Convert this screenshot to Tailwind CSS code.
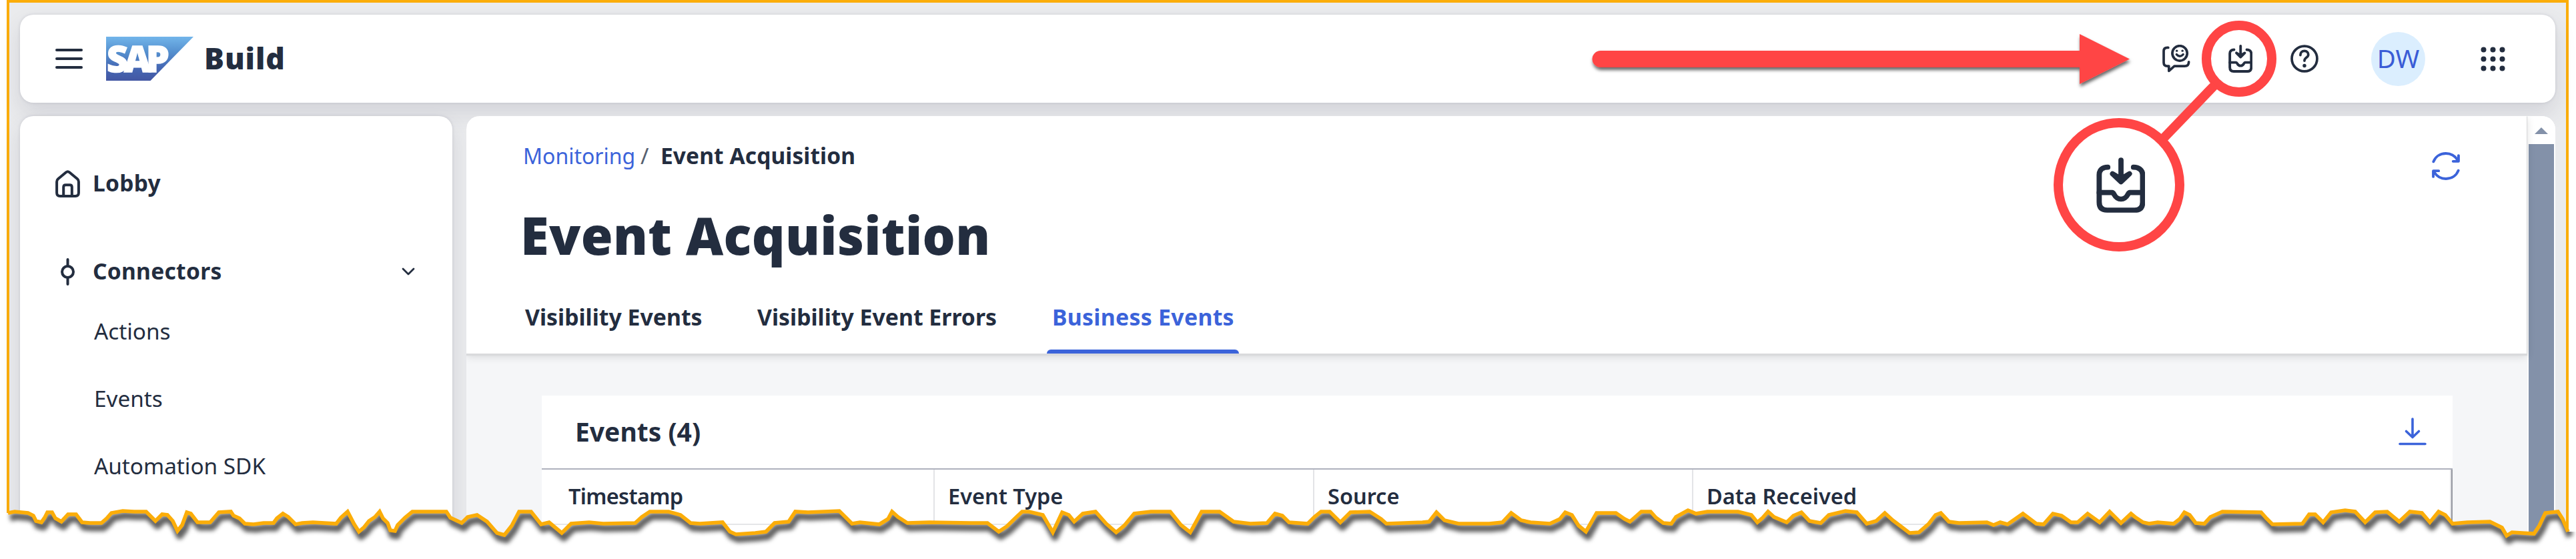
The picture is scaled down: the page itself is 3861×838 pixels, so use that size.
<!DOCTYPE html>
<html lang="en">
<head>
<meta charset="utf-8">
<title>SAP Build – Event Acquisition</title>
<script src="https://cdn.jsdelivr.net/npm/@tailwindcss/browser@4"></script>
</head>
<body class="bg-white">
<div class="relative h-[838px] w-[3861px] overflow-hidden bg-white font-['Noto_Sans',sans-serif] text-[#232d3f]">

  <div class="ml-[10px] flex h-[838px] w-[3840px] flex-col gap-5 border-x-4 border-t-4 border-[#fbad09] bg-[#eaebed] pt-[18px] pr-4 pl-4">

    <!-- Shell bar -->
    <header class="flex h-[132px] shrink-0 items-center rounded-[20px] bg-white pl-[53px] shadow-[0_0_4px_rgba(60,60,90,0.16),0_16px_32px_rgba(60,60,90,0.13)]">
      <div class="flex w-[41px] flex-col gap-[9px]">
        <div class="h-1 rounded-full bg-[#232d3f]"></div>
        <div class="h-1 rounded-full bg-[#232d3f]"></div>
        <div class="h-1 rounded-full bg-[#232d3f]"></div>
      </div>
      <svg class="ml-[35px] h-[66px] w-[131px] overflow-visible" viewBox="0 0 131 66">
        <defs><linearGradient id="sap" x1="0" y1="0" x2="0" y2="1"><stop offset="0" stop-color="#72b5ea"/><stop offset=".35" stop-color="#5590cf"/><stop offset=".7" stop-color="#4568b4"/><stop offset="1" stop-color="#4357a3"/></linearGradient></defs>
        <path d="M0 0H131L66.500 66H0Z" fill="url(#sap)"/>
        <text y="53" font-family="Noto Sans, sans-serif" font-weight="900" font-size="55" fill="#fff" stroke="#fff" stroke-width="1.500"><tspan x="1">S</tspan><tspan x="27">A</tspan><tspan x="60">P</tspan></text>
      </svg>
      <div class="ml-[16px] w-[2935px] text-[44.500px] leading-[60px] font-black tracking-[0.9px]"><div class="-mt-[2px]">Build</div></div>

      <div class="flex items-center">
        <svg class="h-[42px] w-[42px]" viewBox="0 0 124 124" fill="none" stroke="#232d3f" stroke-width="11" stroke-linecap="round" stroke-linejoin="round">
          <path d="M26 13H22Q6 13 6 29V79Q6 95 22 95H29V116L53 95H99Q117 95 117 76"/>
          <circle cx="77" cy="38" r="33"/><path d="M63 43Q77 59 92 43" stroke-width="10"/>
          <circle cx="64" cy="27" r="5" fill="#232d3f" stroke="none"/><circle cx="89" cy="27" r="5" fill="#232d3f" stroke="none"/>
        </svg>
        <svg class="ml-[57px] h-[42px] w-9" viewBox="0 0 72 83" fill="none" stroke="#232d3f" stroke-width="7.700" stroke-linecap="round" stroke-linejoin="round" preserveAspectRatio="none">
          <path d="M17 14.700C9 14.700 4.300 19 4.300 26V67Q4.300 79 16 79H57Q68.500 79 68.500 67V26C68.500 19 63 14.700 55 14.700"/>
          <path d="M4.300 52.700H23.500C27 52.700 26.500 62.500 36.500 62.500S46 52.700 49.500 52.700H68.500M36.500 4V34"/>
          <path d="M24 24.500L36.500 36.500L49 24.500L36.500 32Z" fill="#232d3f"/>
        </svg>
        <svg class="ml-[57px] h-[42px] w-[42px]" viewBox="0 0 124 124" fill="none" stroke="#232d3f" stroke-width="11" stroke-linecap="round">
          <circle cx="62" cy="62" r="56"/><path d="M44 46C44 35 51 28 62 28C73 28 79 35 79 44C79 58 62 56 62 71"/>
          <circle cx="62" cy="93" r="8" fill="#232d3f" stroke="none"/>
        </svg>
        <div class="ml-[79px] flex h-[81px] w-[81px] items-center justify-center rounded-full bg-[#dbeefe] pb-[2px] text-[38.500px] leading-none text-[#3a5cd6]">DW</div>
        <svg class="ml-[83px] h-[37px] w-[37px]" viewBox="0 0 37 37" fill="#232d3f">
          <circle cx="4.500" cy="4.500" r="4"/><circle cx="18.500" cy="4.500" r="4"/><circle cx="32.500" cy="4.500" r="4"/>
          <circle cx="4.500" cy="18.500" r="4"/><circle cx="18.500" cy="18.500" r="4"/><circle cx="32.500" cy="18.500" r="4"/>
          <circle cx="4.500" cy="32.500" r="4"/><circle cx="18.500" cy="32.500" r="4"/><circle cx="32.500" cy="32.500" r="4"/>
        </svg>
      </div>
    </header>

    <div class="flex min-h-0 grow gap-[21px]">
      <!-- Side navigation -->
      <nav class="w-[648px] shrink-0 rounded-t-[20px] bg-white pt-[62px] pl-[53px] shadow-[0_0_4px_rgba(60,60,90,0.16),0_16px_32px_rgba(60,60,90,0.13)]">
        <div class="flex h-[78px] items-center text-[33.500px] leading-none font-bold tracking-[0.3px]">
          <svg class="mr-[19px] h-[41px] w-[37px]" viewBox="0 0 37 41" fill="none" stroke="#232d3f" stroke-width="4" stroke-linejoin="round">
            <path d="M16 3.200Q18.500 1.200 21 3.200L33 13.300Q34.900 15 34.900 17.500V34Q34.900 38.900 30 38.900H7Q2.100 38.900 2.100 34V17.500Q2.100 15 4 13.300Z"/>
            <path d="M12.200 38V25.500Q12.200 22.200 15.500 22.200H21.500Q24.800 22.200 24.800 25.500V38"/>
          </svg>Lobby
        </div>
        <div class="mt-[54px] flex h-[78px] items-center text-[33.500px] leading-none font-bold tracking-[0.3px]">
          <svg class="mr-[19px] h-[41px] w-[37px]" viewBox="0 0 37 41" fill="none" stroke="#232d3f" stroke-width="4" stroke-linecap="round">
            <circle cx="18.500" cy="20.500" r="8.500"/><path d="M18.500 2V11M18.500 30V39"/>
          </svg>
          <span class="w-[463px]">Connectors</span>
          <svg class="h-3 w-5" viewBox="0 0 20 12" fill="none" stroke="#232d3f" stroke-width="2.800" stroke-linecap="round" stroke-linejoin="round"><path d="M2 2L10 10L18 2"/></svg>
        </div>
        <div class="ml-[58px] text-[33.300px] leading-[101px]">
          <div>Actions</div>
          <div>Events</div>
          <div>Automation SDK</div>
        </div>
      </nav>

      <!-- Content -->
      <main class="flex grow overflow-hidden rounded-t-[20px] bg-white">
        <div class="w-[3088px] shrink-0 bg-[#f5f6f8]">
          <section class="relative h-[356px] bg-white pl-[79px] shadow-[0_2px_1px_1px_#d9dadc,0_4px_12px_rgba(0,0,0,0.14)]">
            <div class="flex justify-between pt-[34px] pr-[100px]">
              <div>
                <div class="flex h-[52px] items-center pl-[6px] text-[33.500px] leading-none">
                  <span class="w-[176px] text-[32px] text-[#3b63da]">Monitoring</span>
                  <span class="w-[30px] text-[#56606f]">/</span>
                  <span class="font-bold tracking-[0.1px]">Event Acquisition</span>
                </div>
                <h1 class="mt-[36px] ml-[2px] text-[77.500px] leading-[112px] font-black tracking-[0.4px]">Event Acquisition</h1>
              </div>
              <svg class="mt-[20px] h-[42px] w-[42px]" viewBox="0 0 41 41" fill="none" stroke="#3b63da" stroke-width="3.800" stroke-linecap="round" stroke-linejoin="round">
                <path d="M2.300 14C5 7 11.500 2 20.500 2C28 2 34 6 37.500 11.500M39 5V13.500H31"/>
                <path d="M38.700 27C36 34 29.500 39 20.500 39C13 39 7 35 3.500 29.500M2 36V27.500H10"/>
              </svg>
            </div>
            <div class="mt-[17px] flex h-[104px] text-[33.800px] leading-[100px] font-bold">
              <div class="w-[347px] pl-[9px]">Visibility Events</div>
              <div class="w-[444px] pl-[10px]">Visibility Event Errors</div>
              <div class="w-[288px] pl-[8px] tracking-[0.3px] text-[#3b63da]">Business Events</div>
            </div>
            <div class="absolute bottom-0 left-[870px] h-[6px] w-[288px] rounded-t-md bg-[#3b63da]"></div>
          </section>

          <section class="mt-[63px] ml-[113px] h-[300px] w-[2864px] bg-white">
            <div class="flex h-[109px] items-center justify-between pr-[39px] pb-[2px] pl-[50px]">
              <h2 class="text-[39px] leading-none font-bold">Events (4)</h2>
              <svg class="h-[42px] w-[42px]" viewBox="0 0 42 42" fill="none" stroke="#3b63da" stroke-width="3.600" stroke-linecap="round" stroke-linejoin="round"><path d="M21 2V27M11.500 20.500L21 29.500L30.500 20.500M2 39.500H40"/></svg>
            </div>
            <div class="flex h-[85px] border-t-2 border-b-2 border-t-[#aeb1bd] border-b-[#e5e6e8] text-[32.500px] leading-[79px] font-semibold">
              <div class="w-[589px] border-r-2 border-[#e3e4e7] pl-10 tracking-[-0.7px]">Timestamp</div>
              <div class="w-[569px] border-r-2 border-[#e3e4e7] pl-[20px]">Event Type</div>
              <div class="w-[568px] border-r-2 border-[#e3e4e7] pl-[20px]">Source</div>
              <div class="grow border-r-2 border-[#e3e4e7] pl-[20px]">Data Received</div>
              <div class="w-[2px] bg-[#94979f]"></div>
            </div>
          </section>
        </div>
        <!-- Scrollbar -->
        <div class="flex w-[43px] shrink-0 flex-col items-center border-l border-[#f3f3f4] bg-white pt-[17px]">
          <svg class="h-[10px] w-5" viewBox="0 0 20 10"><path d="M10 0L20 10H0Z" fill="#8391a9"/></svg>
          <div class="mt-[15px] w-[38px] grow bg-[#8391a9]"></div>
        </div>
      </main>
    </div>
  </div>

  <!-- Torn bottom edge and callout drawings laid over the page -->
  <svg class="absolute inset-0 h-[838px] w-[3861px]" viewBox="0 0 3861 838" fill="none">
    <defs>
      <path id="tear" d="M12 769L22 767 42 769 50 773 54 781 62 783 67 776 71 768 78 768 83 777 92 782 102 771 114 771 123 783 135 784 152 784 160 777 167 769 184 766 201 767 219 767 233 781 243 771 251 772 259 781 266 796 273 787 280 768 286 770 296 783 315 783 328 768 346 767 350 773 359 777 367 785 380 786 395 784 410 784 415 777 424 770 432 775 443 786 453 784 469 783 504 785 511 776 521 767 531 786 538 797 546 790 553 781 562 775 569 767 574 777 581 784 585 795 592 796 596 787 607 776 618 767 634 767 669 767 675 776 692 784 701 775 715 772 730 782 745 799 756 802 767 788 778 767 796 767 811 786 823 783 842 799 856 785 883 783 904 785 952 784 962 775 974 767 1002 767 1020 772 1035 784 1049 785 1083 783 1094 797 1103 801 1132 799 1148 797 1161 784 1182 782 1192 767 1211 768 1258 766 1277 785 1289 783 1318 786 1331 778 1337 767 1346 775 1360 784 1393 783 1455 784 1480 784 1497 797 1509 789 1532 767 1542 767 1563 772 1578 798 1592 768 1602 772 1610 782 1623 770 1642 767 1658 785 1673 798 1685 788 1700 770 1725 767 1754 767 1770 787 1784 798 1801 767 1828 767 1849 782 1874 785 1899 784 1911 770 1922 773 1932 783 1960 785 1970 775 1980 767 1993 767 2001 775 2009 783 2024 768 2053 767 2070 778 2078 785 2132 783 2142 782 2153 768 2165 780 2186 785 2232 785 2252 783 2265 769 2280 780 2294 783 2323 785 2338 778 2346 768 2356 772 2366 788 2377 797 2385 783 2393 769 2422 769 2435 778 2443 782 2460 767 2474 767 2482 776 2493 784 2505 785 2512 775 2530 765 2542 770 2559 767 2605 767 2625 772 2634 783 2642 776 2650 767 2659 775 2678 783 2688 773 2700 768 2712 781 2729 784 2741 772 2766 766 2783 768 2798 785 2812 781 2825 769 2837 780 2849 789 2862 799 2876 798 2891 785 2901 772 2909 769 2921 782 2936 784 2978 783 2988 787 2998 783 3009 786 3032 770 3052 785 3063 786 3077 770 3090 773 3104 783 3114 783 3129 770 3147 783 3162 767 3179 784 3194 770 3200 775 3212 783 3221 785 3234 783 3258 785 3267 778 3274 768 3282 772 3291 784 3304 785 3313 775 3331 767 3389 768 3397 777 3406 786 3451 785 3461 771 3470 771 3482 783 3494 768 3515 765 3530 767 3545 783 3560 768 3578 767 3596 782 3612 767 3630 769 3642 783 3655 767 3665 772 3676 785 3698 783 3732 782 3750 791 3757 803 3765 798 3798 800 3806 788 3815 769 3834 767 3841 778 3849 797"/>
      <clipPath id="below"><path id="belowPath" d="M0 769H3861V838H0Z"/></clipPath>
      <filter id="soft" filterUnits="userSpaceOnUse" x="0" y="740" width="3861" height="98"><feGaussianBlur stdDeviation="3"/></filter>
      <filter id="drop" x="-5%" y="-30%" width="110%" height="180%"><feDropShadow dx="1" dy="4" stdDeviation="2.500" flood-color="#000" flood-opacity=".6"/></filter>
    </defs>
    <g clip-path="url(#below)">
      <rect x="0" y="740" width="3861" height="98" fill="#fff"/>
      <g filter="url(#soft)"><use href="#tear" transform="translate(3 7)" stroke="#000" stroke-opacity=".62" stroke-width="11" stroke-linejoin="round"/></g>
    </g>
    <use href="#tear" stroke="#fbad09" stroke-width="5.600" stroke-linejoin="miter"/>

    <path filter="url(#drop)" fill="#ff4545" d="M2399 76H3117V51L3192 88.500L3117 126V101H2399A12.500 12.500 0 0 1 2399 76Z"/>
    <g stroke="#ff4545" stroke-width="14">
      <ellipse cx="3356" cy="88" rx="49" ry="50"/>
      <ellipse cx="3176" cy="277" rx="91" ry="93"/>
      <path d="M3320 127L3243 207"/>
    </g>
    <svg x="3142" y="236" width="73" height="83" viewBox="0 0 72 83" preserveAspectRatio="none" stroke="#232d3f" stroke-width="7.700" stroke-linecap="round" stroke-linejoin="round">
      <path d="M17 14.700C9 14.700 4.300 19 4.300 26V67Q4.300 79 16 79H57Q68.500 79 68.500 67V26C68.500 19 63 14.700 55 14.700"/>
      <path d="M4.300 52.700H23.500C27 52.700 26.500 62.500 36.500 62.500S46 52.700 49.500 52.700H68.500M36.500 4V34"/>
      <path d="M24 24.500L36.500 36.500L49 24.500L36.500 32Z" fill="#232d3f"/>
    </svg>
  </svg>
</div>
<script>
  // The area under the tear is the tear line closed along the bottom of the page.
  document.getElementById('belowPath').setAttribute('d', document.getElementById('tear').getAttribute('d') + 'H3861V838H0V769Z');
</script>
</body>
</html>
